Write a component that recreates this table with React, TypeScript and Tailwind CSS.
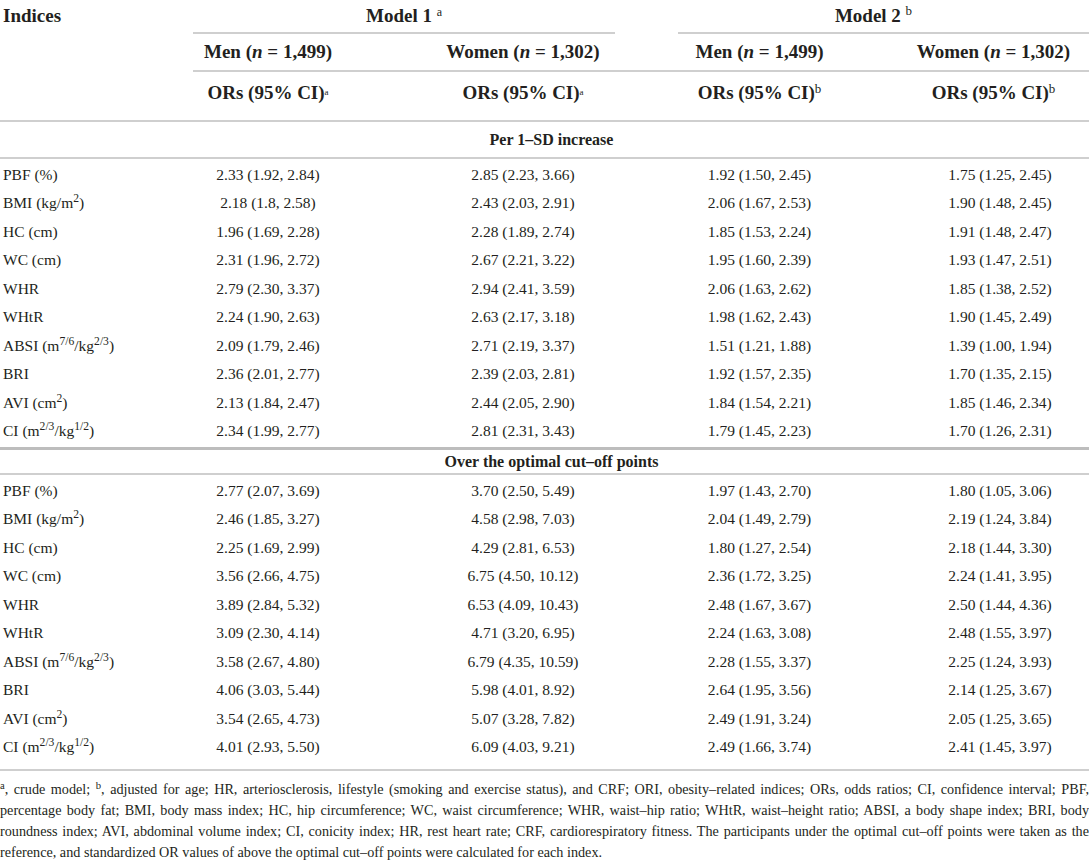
import React from "react";

type Row = { label: React.ReactNode; values: string[] };

const labels: React.ReactNode[] = [
  "PBF (%)",
  <>BMI (kg/m<sup>2</sup>)</>,
  "HC (cm)",
  "WC (cm)",
  "WHR",
  "WHtR",
  <>ABSI (m<sup>7/6</sup>/kg<sup>2/3</sup>)</>,
  "BRI",
  <>AVI (cm<sup>2</sup>)</>,
  <>CI (m<sup>2/3</sup>/kg<sup>1/2</sup>)</>,
];

const perSd: string[][] = [
  ["2.33 (1.92, 2.84)", "2.85 (2.23, 3.66)", "1.92 (1.50, 2.45)", "1.75 (1.25, 2.45)"],
  ["2.18 (1.8, 2.58)", "2.43 (2.03, 2.91)", "2.06 (1.67, 2.53)", "1.90 (1.48, 2.45)"],
  ["1.96 (1.69, 2.28)", "2.28 (1.89, 2.74)", "1.85 (1.53, 2.24)", "1.91 (1.48, 2.47)"],
  ["2.31 (1.96, 2.72)", "2.67 (2.21, 3.22)", "1.95 (1.60, 2.39)", "1.93 (1.47, 2.51)"],
  ["2.79 (2.30, 3.37)", "2.94 (2.41, 3.59)", "2.06 (1.63, 2.62)", "1.85 (1.38, 2.52)"],
  ["2.24 (1.90, 2.63)", "2.63 (2.17, 3.18)", "1.98 (1.62, 2.43)", "1.90 (1.45, 2.49)"],
  ["2.09 (1.79, 2.46)", "2.71 (2.19, 3.37)", "1.51 (1.21, 1.88)", "1.39 (1.00, 1.94)"],
  ["2.36 (2.01, 2.77)", "2.39 (2.03, 2.81)", "1.92 (1.57, 2.35)", "1.70 (1.35, 2.15)"],
  ["2.13 (1.84, 2.47)", "2.44 (2.05, 2.90)", "1.84 (1.54, 2.21)", "1.85 (1.46, 2.34)"],
  ["2.34 (1.99, 2.77)", "2.81 (2.31, 3.43)", "1.79 (1.45, 2.23)", "1.70 (1.26, 2.31)"],
];

const cutOff: string[][] = [
  ["2.77 (2.07, 3.69)", "3.70 (2.50, 5.49)", "1.97 (1.43, 2.70)", "1.80 (1.05, 3.06)"],
  ["2.46 (1.85, 3.27)", "4.58 (2.98, 7.03)", "2.04 (1.49, 2.79)", "2.19 (1.24, 3.84)"],
  ["2.25 (1.69, 2.99)", "4.29 (2.81, 6.53)", "1.80 (1.27, 2.54)", "2.18 (1.44, 3.30)"],
  ["3.56 (2.66, 4.75)", "6.75 (4.50, 10.12)", "2.36 (1.72, 3.25)", "2.24 (1.41, 3.95)"],
  ["3.89 (2.84, 5.32)", "6.53 (4.09, 10.43)", "2.48 (1.67, 3.67)", "2.50 (1.44, 4.36)"],
  ["3.09 (2.30, 4.14)", "4.71 (3.20, 6.95)", "2.24 (1.63, 3.08)", "2.48 (1.55, 3.97)"],
  ["3.58 (2.67, 4.80)", "6.79 (4.35, 10.59)", "2.28 (1.55, 3.37)", "2.25 (1.24, 3.93)"],
  ["4.06 (3.03, 5.44)", "5.98 (4.01, 8.92)", "2.64 (1.95, 3.56)", "2.14 (1.25, 3.67)"],
  ["3.54 (2.65, 4.73)", "5.07 (3.28, 7.82)", "2.49 (1.91, 3.24)", "2.05 (1.25, 3.65)"],
  ["4.01 (2.93, 5.50)", "6.09 (4.03, 9.21)", "2.49 (1.66, 3.74)", "2.41 (1.45, 3.97)"],
];

const toRows = (data: string[][]): Row[] =>
  data.map((values, i) => ({ label: labels[i], values }));

// padding per column so each value sits centred where the original has it
const cellPad = ["pr-[50px]", "pl-[12px]", "", "pl-[33px]"];

const DataRow = ({ row }: { row: Row }) => (
  <div className="grid h-[28.5px] grid-cols-[193px_200px_248px_237px_211px] items-center">
    <div className="pl-[3px] whitespace-nowrap">{row.label}</div>
    {row.values.map((v, i) => (
      <div key={i} className={`text-center whitespace-nowrap ${cellPad[i]}`}>
        {v}
      </div>
    ))}
  </div>
);

const Section = ({ title, className }: { title: string; className: string }) => (
  <div className={`flex items-center justify-center pl-[14px] text-[16px] font-bold ${className}`}>
    {title}
  </div>
);

export default function App() {
  const footLines = [
    <>
      <sup>a</sup>, crude model; <sup>b</sup>, adjusted for age; HR, arteriosclerosis, lifestyle (smoking and exercise
      status), and CRF; ORI, obesity–related indices; ORs, odds ratios; CI, confidence interval; PBF,
    </>,
    <>
      percentage body fat; BMI, body mass index; HC, hip circumference; WC, waist circumference; WHR, waist–hip ratio;
      WHtR, waist–height ratio; ABSI, a body shape index; BRI, body
    </>,
    <>
      roundness index; AVI, abdominal volume index; CI, conicity index; HR, rest heart rate; CRF, cardiorespiratory
      fitness. The participants under the optimal cut–off points were taken as the
    </>,
  ];

  return (
    <div className="w-[1089px] h-[864px] overflow-hidden bg-white font-['Liberation_Serif',serif] text-[15.5px] text-[#231f20]">
      {/* Header */}
      <div className="flex border-b-2 border-[#cfcfcf] text-[19px] font-bold">
        <div className="w-[193px] shrink-0">
          <div className="flex h-[32px] items-center pl-[3px]">Indices</div>
        </div>
        <div className="flex-1">
          <div className="grid h-[34px] grid-cols-[200px_248px_237px_211px]">
            <div className="col-span-2 mr-[26px] flex items-center justify-center border-b-2 border-[#cfcfcf]">
              <span>
                Model 1 <sup className="text-[12px] font-normal">a</sup>
              </span>
            </div>
            <div className="col-span-2 ml-[37px] flex items-center justify-center border-b-2 border-[#cfcfcf]">
              <span className="pr-[20px]">
                Model 2 <sup className="text-[13px] font-normal">b</sup>
              </span>
            </div>
          </div>
          <div className="grid h-[38px] grid-cols-[200px_248px_237px_211px] items-center border-b-2 border-[#cfcfcf]">
            <div className="text-center pr-[50px] whitespace-nowrap">
              Men (<i>n</i> = 1,499)
            </div>
            <div className="text-center pl-[12px] whitespace-nowrap">
              Women (<i>n</i> = 1,302)
            </div>
            <div className="text-center whitespace-nowrap">
              Men (<i>n</i> = 1,499)
            </div>
            <div className="text-center pl-[20px] whitespace-nowrap">
              Women (<i>n</i> = 1,302)
            </div>
          </div>
          <div className="grid h-[48px] grid-cols-[200px_248px_237px_211px] items-center pb-[5px]">
            <div className="text-center pr-[50px] whitespace-nowrap">
              ORs (95% CI)<sup className="text-[9px] font-normal">a</sup>
            </div>
            <div className="text-center pl-[12px] whitespace-nowrap">
              ORs (95% CI)<sup className="text-[9px] font-normal">a</sup>
            </div>
            <div className="text-center whitespace-nowrap">
              ORs (95% CI)<sup className="text-[13px] font-normal">b</sup>
            </div>
            <div className="text-center pl-[20px] whitespace-nowrap">
              ORs (95% CI)<sup className="text-[13px] font-normal">b</sup>
            </div>
          </div>
        </div>
      </div>

      <Section title="Per 1–SD increase" className="h-[37px] border-b-2 border-[#cfcfcf]" />

      <div className="pt-[1px] pb-[2px] border-b-[3px] border-[#bdbdbd]">
        {toRows(perSd).map((r, i) => (
          <DataRow key={i} row={r} />
        ))}
      </div>

      <Section title="Over the optimal cut–off points" className="h-[25px] border-b-2 border-[#cfcfcf]" />

      <div className="pt-[1px] pb-[8px] border-b-2 border-[#cfcfcf]">
        {toRows(cutOff).map((r, i) => (
          <DataRow key={i} row={r} />
        ))}
      </div>

      {/* Footnote */}
      <div className="pt-[8px] text-[14.2px] leading-[21px]">
        {footLines.map((l, i) => (
          <div key={i} className="whitespace-nowrap text-justify [text-align-last:justify]">
            {l}
          </div>
        ))}
        <div className="whitespace-nowrap">
          reference, and standardized OR values of above the optimal cut–off points were calculated for each index.
        </div>
      </div>
    </div>
  );
}
